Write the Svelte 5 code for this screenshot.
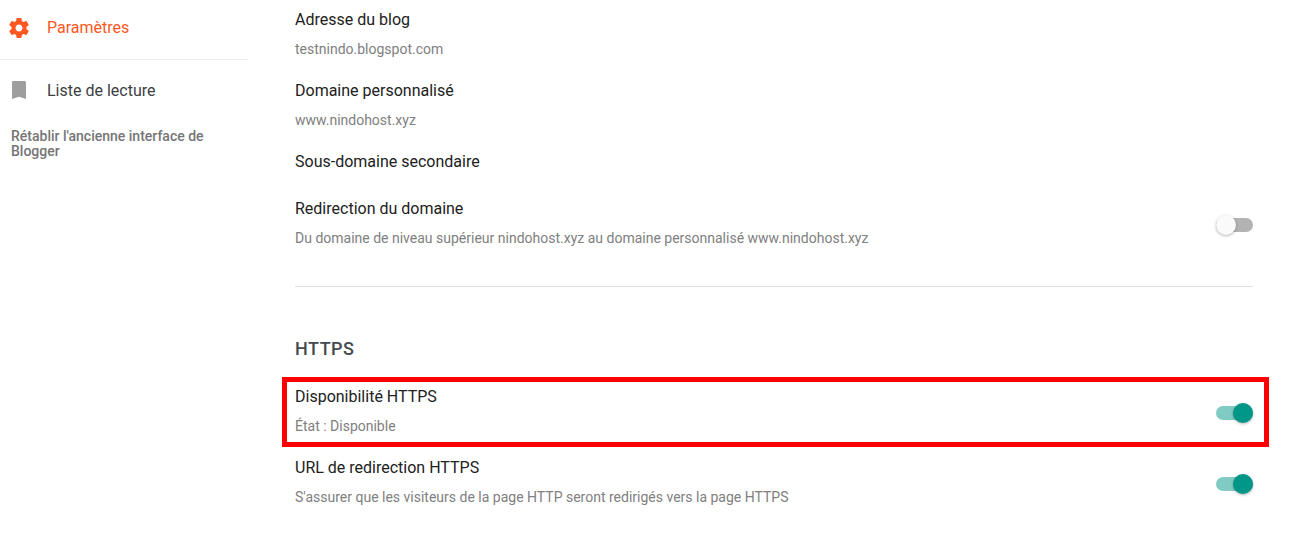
<script>
  const plain = [
    { title: 'Adresse du blog', sub: 'testnindo.blogspot.com' },
    { title: 'Domaine personnalisé', sub: 'www.nindohost.xyz' },
    { title: 'Sous-domaine secondaire' }
  ];
</script>

<div class="page">
  <nav class="side">
    <a class="nav active">
      <svg viewBox="0 0 24 24" class="ico"><path fill="#ff5722" d="M19.43 12.98c.04-.32.07-.64.07-.98s-.03-.66-.07-.98l2.11-1.65c.19-.15.24-.42.12-.64l-2-3.46c-.12-.22-.39-.3-.61-.22l-2.49 1c-.52-.4-1.08-.73-1.69-.98l-.38-2.65C14.46 2.18 14.25 2 14 2h-4c-.25 0-.46.18-.49.42l-.38 2.65c-.61.25-1.17.59-1.69.98l-2.49-1c-.23-.09-.49 0-.61.22l-2 3.46c-.13.22-.07.49.12.64l2.11 1.65c-.04.32-.07.65-.07.98s.03.66.07.98l-2.11 1.65c-.19.15-.24.42-.12.64l2 3.46c.12.22.39.3.61.22l2.49-1c.52.4 1.08.73 1.69.98l.38 2.65c.03.24.24.42.49.42h4c.25 0 .46-.18.49-.42l.38-2.65c.61-.25 1.17-.59 1.69-.98l2.49 1c.23.09.49 0 .61-.22l2-3.46c.12-.22.07-.49-.12-.64l-2.11-1.65zM12 15.5c-1.93 0-3.5-1.57-3.5-3.5s1.57-3.5 3.5-3.5 3.5 1.57 3.5 3.5-1.57 3.5-3.5 3.5z"/></svg>
      <span>Paramètres</span>
    </a>
    <a class="nav second">
      <svg viewBox="0 0 24 24" class="ico"><path fill="#9e9e9e" d="M6 3h11.5c.8 0 1.5.7 1.5 1.5V21l-7-2.2L5 21V4c0-.6.4-1 1-1z"/></svg>
      <span>Liste de lecture</span>
    </a>
    <div class="restore">Rétablir l'ancienne interface de Blogger</div>
  </nav>

  <main class="main">
    {#each plain as r}
      <div class="row" class:only={!r.sub}>
        <div class="title">{r.title}</div>
        {#if r.sub}<div class="sub">{r.sub}</div>{/if}
      </div>
    {/each}

    <div class="row toggle-row redirect">
      <div>
        <div class="title">Redirection du domaine</div>
        <div class="sub">Du domaine de niveau supérieur nindohost.xyz au domaine personnalisé www.nindohost.xyz</div>
      </div>
      <span class="switch"><span class="track"></span><span class="thumb"></span></span>
    </div>

    <hr class="rule" />

    <h2 class="heading">HTTPS</h2>

    <div class="row toggle-row highlighted">
      <div>
        <div class="title">Disponibilité HTTPS</div>
        <div class="sub">État : Disponible</div>
      </div>
      <span class="switch on"><span class="track"></span><span class="thumb"></span></span>
      <span class="marker"></span>
    </div>

    <div class="row toggle-row">
      <div>
        <div class="title">URL de redirection HTTPS</div>
        <div class="sub">S'assurer que les visiteurs de la page HTTP seront redirigés vers la page HTTPS</div>
      </div>
      <span class="switch on"><span class="track"></span><span class="thumb"></span></span>
    </div>
  </main>
</div>

<style>
  :global(body) { margin: 0; background: #fff; }
  .page {
    display: flex;
    width: 1295px;
    height: 545px;
    overflow: hidden;
    font-family: Roboto, "Liberation Sans", sans-serif;
    color: #212121;
  }
  .side { width: 248px; flex: none; }
  .nav {
    display: flex;
    align-items: center;
    gap: 16px;
    padding: 0 0 0 7px;
    height: 56px;
    font-size: 16px;
    color: #3c4043;
  }
  .nav.active {
    color: #ff5722;
    border-bottom: 1px solid #eeeeee;
    height: 60px;
    box-sizing: border-box;
    padding-bottom: 4px;
  }
  .nav.second { height: 60px; }
  .ico { width: 24px; height: 24px; flex: none; }
  .restore {
    margin: 9px 30px 0 11px;
    font-size: 14px;
    font-weight: 500;
    line-height: 15px;
    color: #757575;
  }
  .main {
    width: 958px;
    margin-left: 47px;
    padding-top: 10px;
  }
  .row { height: 71px; }
  .row.only { height: 47px; }
  .title {
    font-size: 16px;
    line-height: 20px;
  }
  .sub {
    margin-top: 9px;
    font-size: 14px;
    line-height: 20px;
    color: #808080;
  }
  .toggle-row {
    position: relative;
    display: flex;
    justify-content: space-between;
    align-items: flex-start;
  }
  .redirect { height: 50px; }
  .toggle-row .switch { margin-top: 16px; }
  .rule {
    margin: 37px 0 0;
    border: 0;
    border-top: 1px solid #e0e0e0;
  }
  .heading {
    margin: 52px 0 0;
    font-size: 18px;
    line-height: 20px;
    font-weight: 500;
    letter-spacing: .5px;
    color: #424a50;
  }
  .highlighted { margin-top: 28px; }
  .switch {
    position: relative;
    display: block;
    width: 37px;
    height: 20px;
    flex: none;
  }
  .track {
    position: absolute;
    left: 0;
    right: 0;
    top: 3px;
    height: 14px;
    border-radius: 7px;
    background: #b3b3b3;
  }
  .thumb {
    position: absolute;
    left: 0;
    top: 0;
    width: 20px;
    height: 20px;
    border-radius: 50%;
    background: #fafafa;
    box-shadow: 0 1px 3px rgba(0,0,0,.3);
  }
  .on .track { background: #80cbc4; }
  .on .thumb { left: 17px; background: #009688; }
  .marker {
    position: absolute;
    left: -13px;
    right: -16px;
    top: -10px;
    height: 60px;
    border: 5px solid #ff0000;
    pointer-events: none;
  }
</style>
